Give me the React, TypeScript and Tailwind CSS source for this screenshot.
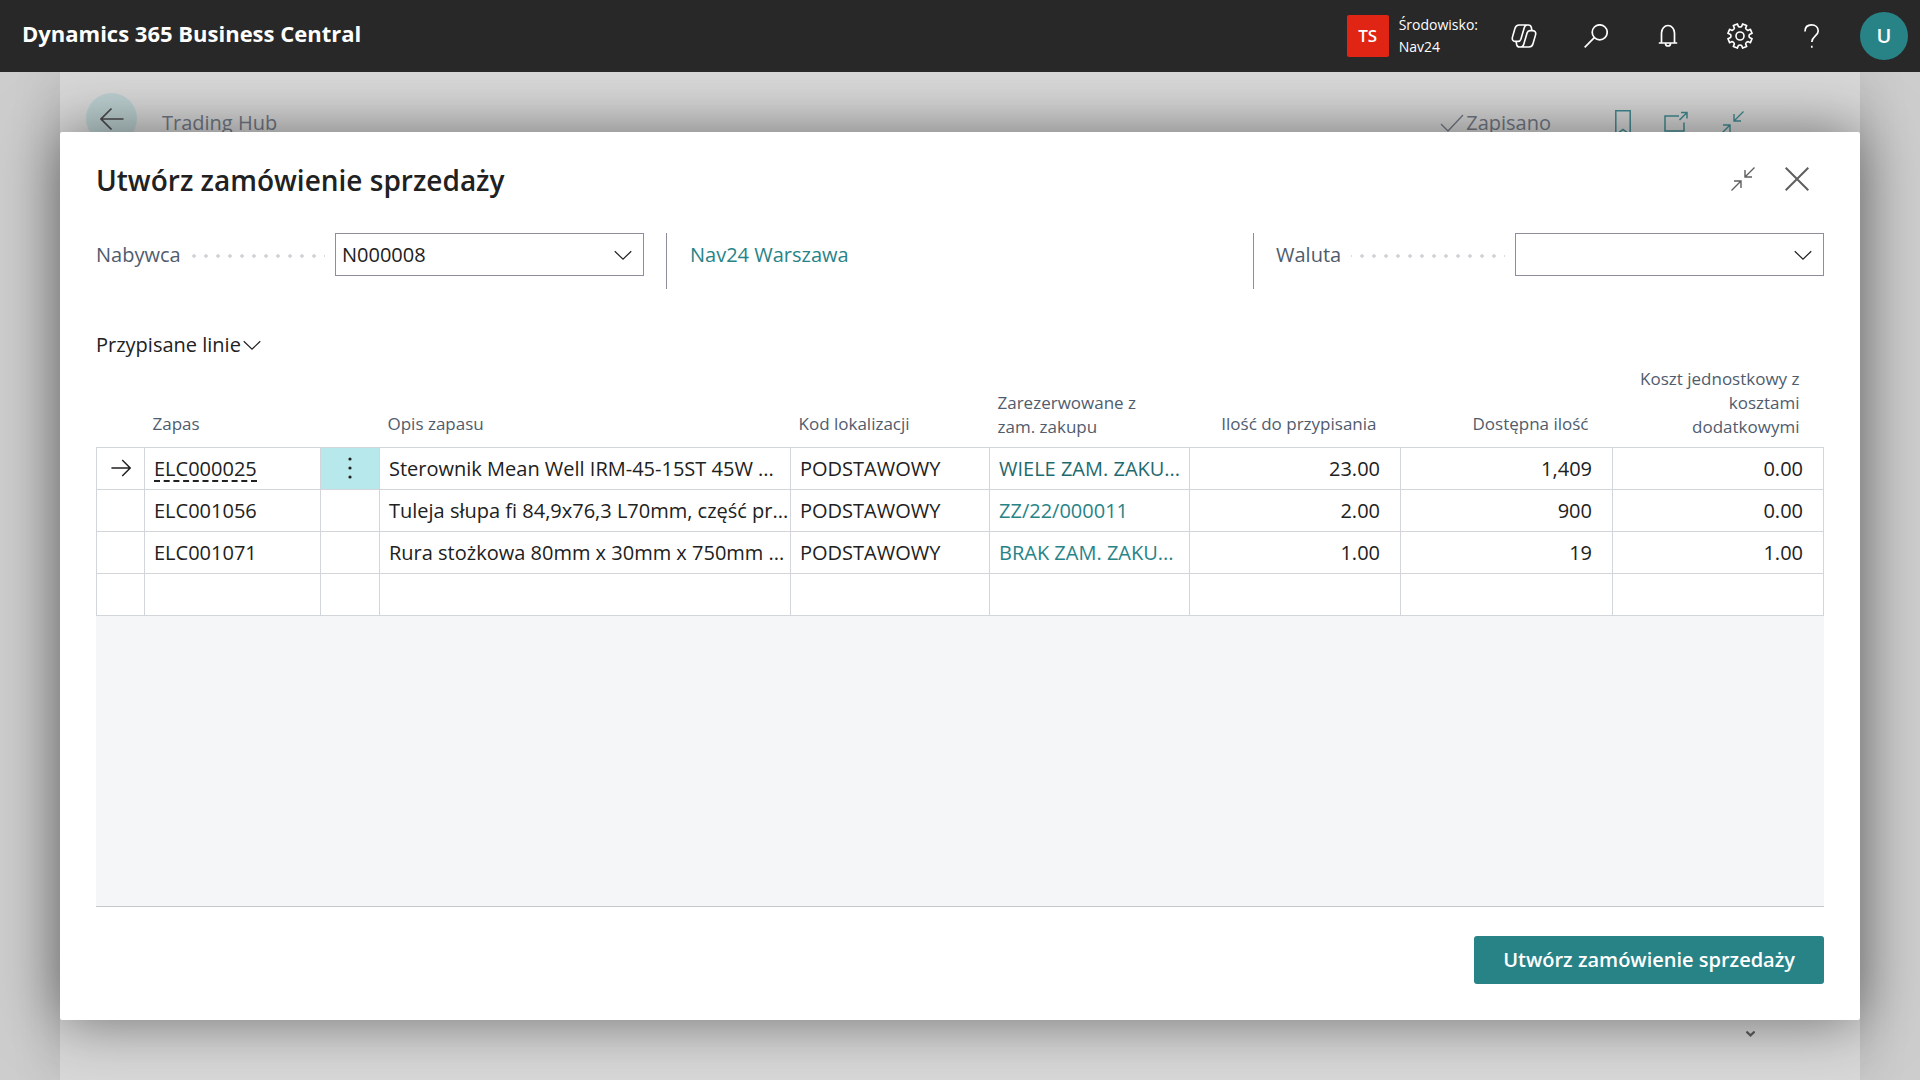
import { useState } from 'react'
import type { ReactNode } from 'react'

type Line = {
  item: string
  description: string
  location: string
  reserved: string
  quantity: string
  available: string
  unitCost: string
}

const LINES: Line[] = [
  {
    item: 'ELC000025',
    description: 'Sterownik Mean Well IRM-45-15ST 45W ...',
    location: 'PODSTAWOWY',
    reserved: 'WIELE ZAM. ZAKU...',
    quantity: '23.00',
    available: '1,409',
    unitCost: '0.00',
  },
  {
    item: 'ELC001056',
    description: 'Tuleja słupa fi 84,9x76,3 L70mm, część pr...',
    location: 'PODSTAWOWY',
    reserved: 'ZZ/22/000011',
    quantity: '2.00',
    available: '900',
    unitCost: '0.00',
  },
  {
    item: 'ELC001071',
    description: 'Rura stożkowa 80mm x 30mm x 750mm ...',
    location: 'PODSTAWOWY',
    reserved: 'BRAK ZAM. ZAKU...',
    quantity: '1.00',
    available: '19',
    unitCost: '1.00',
  },
]

// Gear outline with eight teeth around (12, 12)
const GEAR_PATH = (() => {
  const at = (r: number, deg: number) => {
    const a = (deg * Math.PI) / 180
    return `${(12 + r * Math.cos(a)).toFixed(2)} ${(12 + r * Math.sin(a)).toFixed(2)}`
  }
  let d = ''
  for (let i = 0; i < 8; i++) {
    const c = i * 45 + 22.5
    d += `${i === 0 ? 'M' : 'L'}${at(8.9, c - 13)} L${at(11.4, c - 10)} L${at(11.4, c + 10)} L${at(8.9, c + 13)} `
    d += `Q${at(7.9, c + 22.5)} ${at(8.9, c + 32)} `
  }
  return d + 'Z'
})()

// One lobe of the Copilot mark; the other is the same lobe turned half round
const COPILOT_LOBE =
  'M19.300 6.800L18.800 4.200C18.400 2.500 17.600 1.800 16 1.800H7.500C5.200 1.800 4.200 3 3.700 4.800L1.400 12.800C.7 15.200 1.700 17 4 17H6.500C8 17 8.700 16.200 9.100 15L12.300 4.200C12.800 2.600 13.600 1.800 15.200 1.800'

function Icon({ children, className = 'size-6', width = 1.5 }: { children: ReactNode; className?: string; width?: number }) {
  return (
    <svg viewBox="0 0 24 24" fill="none" stroke="currentColor" strokeWidth={width} className={className} aria-hidden="true">
      {children}
    </svg>
  )
}

const CollapseIcon = () => (
  <Icon width={1.4}>
    <path d="M23.5 0.5L14 10M14 3v7h7M0.5 23.5L10 14M10 21v-7H3" />
  </Icon>
)

const ChevronDown = () => (
  <Icon className="h-6 w-[18px]" width={1.6}>
    <path d="M1 7l11 10.500L23 7" />
  </Icon>
)

const HEADER_ACTIONS = [
  {
    label: 'Copilot',
    icon: (
      <Icon className="size-[26px]">
        <path d={COPILOT_LOBE} />
        <path d={COPILOT_LOBE} transform="rotate(180 12 12)" />
      </Icon>
    ),
  },
  {
    label: 'Szukaj',
    icon: (
      <Icon width={1.7}>
        <circle cx="15.700" cy="8.300" r="7.500" />
        <path d="M10.300 13.700L.7 23.300" />
      </Icon>
    ),
  },
  {
    label: 'Powiadomienia',
    icon: (
      <Icon width={1.7}>
        <path d="M2.800 19h18.400M5.500 19V9a6.500 7.500 0 0 1 13 0v10M9.500 19.500a2.500 2.500 0 0 0 5 0" />
      </Icon>
    ),
  },
  {
    label: 'Ustawienia',
    icon: (
      <Icon className="size-[26px]">
        <path d={GEAR_PATH} strokeLinejoin="round" />
        <circle cx="12" cy="12" r="3.700" />
      </Icon>
    ),
  },
  {
    label: 'Pomoc',
    icon: (
      <Icon width={1.7}>
        <path d="M5 7.500C5 3.500 7.500 .9 11.500 .9s6.700 2.600 6.700 6c0 5.100-6.400 5.600-6.400 11.100M11.800 21.800v2" />
      </Icon>
    ),
  },
]

function LookupField({ id, label, value }: { id: string; label: string; value: string }) {
  const [text, setText] = useState(value)

  return (
    <div className="grid grid-cols-[239fr_309fr]">
      <div className="mr-[10px] flex items-center bg-[radial-gradient(circle_at_2px_23px,#d0d3d8_1.5px,transparent_2px)] bg-[length:12px_43px]">
        <label htmlFor={id} className="bg-white pr-[10px] text-[#505c6d]">
          {label}
        </label>
      </div>
      <div className="flex h-[43px] items-center border border-[#8d8d9b]">
        <input
          id={id}
          role="combobox"
          aria-expanded="false"
          className="h-full w-full min-w-0 flex-1 pl-[6px] text-[#212121] outline-none"
          value={text}
          onChange={(e) => setText(e.target.value)}
        />
        <button className="flex h-full w-10 items-center justify-center text-[#212121]" aria-label={`${label} – lista`}>
          <ChevronDown />
        </button>
      </div>
    </div>
  )
}

function TopBar() {
  return (
    <header className="flex h-[72px] items-center justify-between bg-[#282828] pr-3 pl-[22px] text-white">
      <a href="#" className="pb-[6px] text-[22px] font-bold">
        Dynamics 365 Business Central
      </a>
      <div className="flex items-center">
        <div className="flex size-[42px] items-center justify-center rounded-[2px] bg-[#e02514] text-[17px] font-semibold">TS</div>
        <div className="mx-[10px] text-[14px] leading-[22px]">
          <div>Środowisko:</div>
          <div>Nav24</div>
        </div>
        {HEADER_ACTIONS.map((action) => (
          <button key={action.label} aria-label={action.label} className="flex h-[72px] w-[72px] items-center justify-center">
            {action.icon}
          </button>
        ))}
        <button className="ml-3 size-12 rounded-full bg-[#288387] text-xl font-semibold" aria-label="Konto">
          U
        </button>
      </div>
    </header>
  )
}

// Page left open behind the dialog, dimmed
function BackgroundPage() {
  return (
    <div className="col-start-1 row-start-1 bg-[#cdcdcd] px-[60px]">
      <div className="flex h-full flex-col justify-between bg-[#d8d8d8] shadow-[0_0_50px_rgba(0,0,0,0.12)]">
        <div className="flex items-center justify-between pt-[21px] pr-[116px] pl-[26px]">
          <div className="flex items-center gap-[25px]">
            <button className="flex size-[51px] items-center justify-center rounded-full bg-[#bccfd0] text-[#4a4a4a]" aria-label="Wstecz">
              <Icon width={1.7}>
                <path d="M23.500 12H1M11.500 1.500L1 12l10.500 10.500" />
              </Icon>
            </button>
            <span className="pt-2 text-xl text-[#727985]">Trading Hub</span>
          </div>
          <div className="flex items-center pt-2 text-[#3f8a90]">
            <span className="mr-[64px] flex items-center gap-[2px] text-xl text-[#727985]">
              <Icon width={1.3}>
                <path d="M1 13l7 7L23 4" />
              </Icon>
              Zapisano
            </span>
            <button className="mr-[33px]" aria-label="Zakładka">
              <svg viewBox="0 0 16 26" className="h-[26px] w-4" fill="none" stroke="currentColor" strokeWidth="1.500" aria-hidden="true">
                <path d="M.8 .8h14.400v24L8 19.500L.8 24.800z" />
              </svg>
            </button>
            <button className="mr-[32px]" aria-label="Otwórz w nowym oknie">
              <Icon>
                <path d="M15 5H1v15h19V11.500M15.500 9L22.500 2M17 1.500h6v6" />
              </Icon>
            </button>
            <button aria-label="Zwiń stronę">
              <CollapseIcon />
            </button>
          </div>
        </div>
        <div className="flex justify-end pr-[105px] pb-[42px]">
          <Icon className="size-[9px] text-[#606060]" width={6}>
            <path d="M1 7l11 10L23 7" />
          </Icon>
        </div>
      </div>
    </div>
  )
}

function LinesTable() {
  const head = 'px-2 pb-2 align-bottom font-normal'
  const numberHead = 'pr-6 pl-5 pb-2 text-right align-bottom font-normal'
  const cell = 'h-[42px] border border-[#d2d5d9] pt-[2px] pr-0 pl-[9px] whitespace-nowrap'
  const number = 'h-[42px] border border-[#d2d5d9] pt-[2px] pr-[20px] text-right whitespace-nowrap'

  return (
    <table className="w-full table-fixed border-collapse text-[20px] leading-6 text-[#212121]">
      <colgroup>
        <col className="w-[48px]" />
        <col className="w-[176px]" />
        <col className="w-[59px]" />
        <col />
        <col className="w-[199px]" />
        <col className="w-[200px]" />
        <col className="w-[211px]" />
        <col className="w-[212px]" />
        <col className="w-[211px]" />
      </colgroup>
      <thead>
        <tr className="h-[87px] text-left text-[17px] leading-[30px] text-[#505c6d]">
          <td />
          <th className={head}>Zapas</th>
          <td />
          <th className={head}>Opis zapasu</th>
          <th className={head}>Kod lokalizacji</th>
          <th className={`${head} leading-6`}>
            Zarezerwowane z<br />
            zam. zakupu
          </th>
          <th className={numberHead}>Ilość do przypisania</th>
          <th className={numberHead}>Dostępna ilość</th>
          <th className={`${numberHead} leading-6`}>Koszt jednostkowy z kosztami dodatkowymi</th>
        </tr>
      </thead>
      <tbody>
        {LINES.map((line, i) => (
          <tr key={line.item}>
            <td className="h-[42px] border border-[#d2d5d9]">
              {i === 0 && (
                <Icon className="mx-auto size-5" width={1.7}>
                  <path d="M0.500 12H23M13.500 2.500L23 12l-9.500 9.500" />
                </Icon>
              )}
            </td>
            <td className={cell}>
              {i === 0 ? (
                <a href="#" className="inline-block border-b-2 border-dashed border-[#212121] leading-[22px]">
                  {line.item}
                </a>
              ) : (
                line.item
              )}
            </td>
            <td className={i === 0 ? 'border border-[#d2d5d9] bg-[#b7e9ec]' : 'border border-[#d2d5d9]'}>
              {i === 0 && (
                <button className="flex h-[40px] w-full items-center justify-center" aria-label="Pokaż więcej opcji">
                  <svg viewBox="0 0 4 24" className="h-6 w-1" fill="currentColor" aria-hidden="true">
                    <circle cx="2" cy="3" r="1.600" />
                    <circle cx="2" cy="12" r="1.600" />
                    <circle cx="2" cy="21" r="1.600" />
                  </svg>
                </button>
              )}
            </td>
            <td className={cell}>{line.description}</td>
            <td className={cell}>{line.location}</td>
            <td className={cell}>
              <a href="#" className={i === 0 ? 'text-[#1f6a6e]' : 'text-[#288387]'}>
                {line.reserved}
              </a>
            </td>
            <td className={number}>{line.quantity}</td>
            <td className={number}>{line.available}</td>
            <td className={number}>{line.unitCost}</td>
          </tr>
        ))}
        {/* Empty row for a new line */}
        <tr>
          {Array.from({ length: 9 }, (_, i) => (
            <td key={i} className={cell} />
          ))}
        </tr>
      </tbody>
    </table>
  )
}

function CreateOrderDialog() {
  return (
    <div
      role="dialog"
      aria-labelledby="dialog-title"
      className="z-10 col-start-1 row-start-1 mx-[60px] my-[60px] flex flex-col rounded-[2px] bg-white px-9 pt-6 pb-9 text-[20px] shadow-[0_0_60px_rgba(0,0,0,0.5)]"
    >
      <div className="flex h-12 items-center justify-between pr-[15px]">
        <h1 id="dialog-title" className="text-[28px] font-semibold text-[#212121]">
          Utwórz zamówienie sprzedaży
        </h1>
        <div className="flex items-center gap-[30px] pb-[2px] text-[#5f5f5f]">
          <button aria-label="Zwiń">
            <CollapseIcon />
          </button>
          <button aria-label="Zamknij">
            <Icon width={2}>
              <path d="M0.700 0.700l22.600 22.600M23.300 0.700L0.700 23.300" />
            </Icon>
          </button>
        </div>
      </div>

      <div className="mt-[29px] grid grid-cols-[570fr_587fr_571fr]">
        <div className="h-14 pr-[22px]">
          <LookupField id="customer" label="Nabywca" value="N000008" />
        </div>
        <div className="h-14 border-l border-[#8d8d9b] pl-[23px] leading-[44px]">
          <a href="#" className="text-[#288387]">
            Nav24 Warszawa
          </a>
        </div>
        <div className="h-14 border-l border-[#8d8d9b] pl-[22px]">
          <LookupField id="currency" label="Waluta" value="" />
        </div>
      </div>

      <button className="mt-[41px] flex h-[30px] items-center gap-[2px] self-start text-[#212121]">
        Przypisane linie
        <ChevronDown />
      </button>

      <div className="flex flex-1 flex-col">
        <LinesTable />
        <div className="flex-1 border-b border-[#c8c8c8] bg-[#f5f6f8]" />
      </div>

      <div className="flex justify-end pt-[29px]">
        <button className="h-12 rounded-[3px] bg-[#288387] px-[29px] text-xl font-semibold text-white">Utwórz zamówienie sprzedaży</button>
      </div>
    </div>
  )
}

export default function App() {
  return (
    <div className="flex min-h-screen flex-col font-['Open_Sans','Noto_Sans',sans-serif]">
      <TopBar />
      <main className="grid flex-1 grid-cols-1 overflow-hidden">
        <BackgroundPage />
        <CreateOrderDialog />
      </main>
    </div>
  )
}
